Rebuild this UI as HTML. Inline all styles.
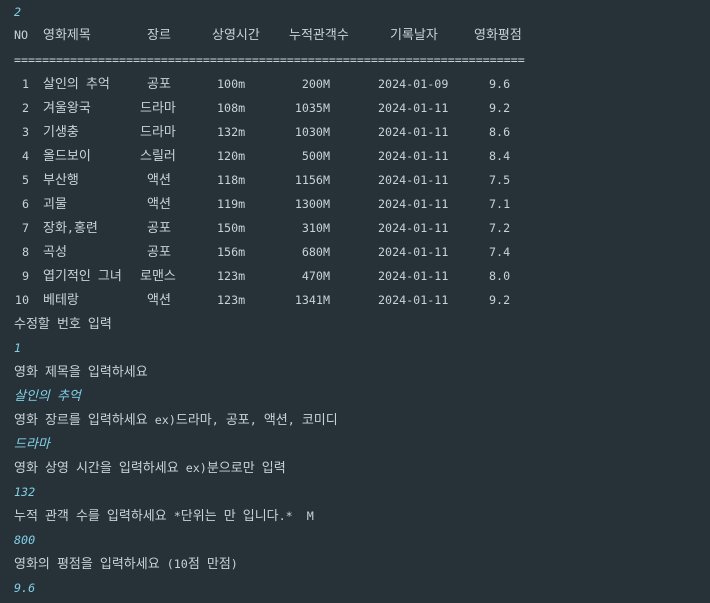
<!DOCTYPE html>
<html><head><meta charset="utf-8"><style>
body{margin:0;width:710px;height:603px;background:#263238;overflow:hidden;font-family:"DejaVu Sans Mono","Noto Sans CJK KR",monospace;font-size:11.7px;color:#c9d1d9}
.l{position:absolute;height:24px;line-height:24px;white-space:pre}
.i{color:#82cfe6;font-style:italic}
.r{text-align:right}
.k{font-size:13px}
</style></head><body>
<div id="all">
<div class="l i" style="left:14px;top:0">2</div>
<div class="l" style="left:14px;top:23px">NO</div>
<div class="l" style="left:43px;top:23px">영화제목</div>
<div class="l" style="left:147px;top:23px">장르</div>
<div class="l" style="left:212px;top:23px">상영시간</div>
<div class="l" style="left:289px;top:23px">누적관객수</div>
<div class="l" style="left:390px;top:23px">기록날자</div>
<div class="l" style="left:474px;top:23px">영화평점</div>
<div class="l" style="left:14px;top:48px;letter-spacing:-0.04px">=========================================================================</div>
<div id="rows"></div>
</div>
<script>
var d=[["1","살인의 추억","공포",147,"100m","200M","2024-01-09","9.6"],
["2","겨울왕국","드라마",140,"108m","1035M","2024-01-11","9.2"],
["3","기생충","드라마",140,"132m","1030M","2024-01-11","8.6"],
["4","올드보이","스릴러",140,"120m","500M","2024-01-11","8.4"],
["5","부산행","액션",147,"118m","1156M","2024-01-11","7.5"],
["6","괴물","액션",147,"119m","1300M","2024-01-11","7.1"],
["7","장화,홍련","공포",147,"150m","310M","2024-01-11","7.2"],
["8","곡성","공포",147,"156m","680M","2024-01-11","7.4"],
["9","엽기적인 그녀","로맨스",140,"123m","470M","2024-01-11","8.0"],
["10","베테랑","액션",147,"123m","1341M","2024-01-11","9.2"]];
var h="";
d.forEach(function(r,k){var t=72+k*24;
h+='<div class="l r" style="left:0;width:29px;top:'+t+'px">'+r[0]+'</div>'+
'<div class="l" style="left:43px;top:'+t+'px">'+r[1]+'</div>'+
'<div class="l" style="left:'+r[3]+'px;top:'+t+'px">'+r[2]+'</div>'+
'<div class="l" style="left:217px;top:'+t+'px">'+r[4]+'</div>'+
'<div class="l r" style="left:280px;width:50px;top:'+t+'px">'+r[5]+'</div>'+
'<div class="l" style="left:378px;top:'+t+'px">'+r[6]+'</div>'+
'<div class="l" style="left:489px;top:'+t+'px">'+r[7]+'</div>';});
var b=[["수정할 번호 입력",0],["1",1],["영화 제목을 입력하세요",0],["살인의 추억",1],["영화 장르를 입력하세요 ex)드라마, 공포, 액션, 코미디",0],["드라마",1],["영화 상영 시간을 입력하세요 ex)분으로만 입력",0],["132",1],["누적 관객 수를 입력하세요 *단위는 만 입니다.*  M",0],["800",1],["영화의 평점을 입력하세요 (10점 만점)",0],["9.6",1]];
b.forEach(function(x,k){h+='<div class="l'+(x[1]?' i':'')+'" style="left:14px;top:'+(312+k*24)+'px">'+x[0]+'</div>';});
document.getElementById("rows").innerHTML=h;
document.querySelectorAll(".l").forEach(function(e){e.innerHTML=e.innerHTML.replace(/([가-힣]+)/g,'<span class="k">$1</span>');});
</script>
</body></html>
